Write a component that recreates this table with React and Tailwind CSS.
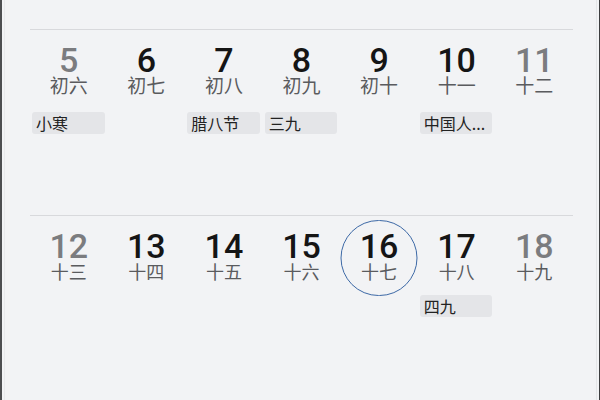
import React from 'react';

const weeks = [
  {
    days: [
      { n: '5', l: '初六', weekend: true, tag: '小寒' },
      { n: '6', l: '初七' },
      { n: '7', l: '初八', tag: '腊八节' },
      { n: '8', l: '初九', tag: '三九' },
      { n: '9', l: '初十' },
      { n: '10', l: '十一', tag: '中国人...' },
      { n: '11', l: '十二', weekend: true },
    ],
  },
  {
    days: [
      { n: '12', l: '十三', weekend: true },
      { n: '13', l: '十四' },
      { n: '14', l: '十五' },
      { n: '15', l: '十六' },
      { n: '16', l: '十七', today: true },
      { n: '17', l: '十八', tag: '四九' },
      { n: '18', l: '十九', weekend: true },
    ],
  },
];

function DayCell({ day, first }) {
  return (
    <div className="relative flex flex-col items-center">
      {day.today && (
        <div className="absolute left-1/2 top-[-12px] h-[76px] w-[77px] -translate-x-1/2 rounded-full border-[1.5px] border-[#3d69a6]" />
      )}
      <div
        className={`text-[34px] leading-[29px] font-medium font-['Roboto',sans-serif] ${day.weekend ? 'text-[#7b7c7f]' : 'text-[#151515]'}`}
      >
        {day.n}
      </div>
      <div
        className={`leading-[19px] text-[#5a5b5e] font-['Noto_Sans_CJK_SC',sans-serif] ${first ? 'text-[19px]' : 'mt-[1px] text-[18px]'}`}
      >
        {day.l}
      </div>
      <div className={`h-[22px] w-full pl-[2px] pr-[3px] ${first ? 'mt-[18px]' : 'mt-[14px]'}`}>
        {day.tag && (
          <div className="flex h-full items-center rounded-[3px] bg-[#e4e5e8] px-[4px] text-[16px] text-[#222] font-['Noto_Sans_CJK_SC',sans-serif] whitespace-nowrap overflow-hidden">
            {day.tag}
          </div>
        )}
      </div>
    </div>
  );
}

export default function App() {
  return (
    <div className="flex h-[400px] w-[600px] bg-[#f2f3f5]">
      <div className="w-[2px] bg-[#4d4e50]" />
      <div className="w-[2px]" />
      <div className="w-[1px] bg-[#e8e9eb]" />
      <div className="flex-1 pl-[25px] pr-[23px]">
        {weeks.map((w, i) => (
          <div key={i} className={i === 0 ? 'pt-[29px]' : 'pt-[81px]'}>
            <div className="h-[1px] bg-[#d8d9dc]" />
            <div className="grid grid-cols-7 pt-[16px]">
              {w.days.map((d) => (
                <DayCell key={d.n} day={d} first={i === 0} />
              ))}
            </div>
          </div>
        ))}
      </div>
      <div className="w-[1px] bg-[#e4e5e7]" />
      <div className="w-[2px]" />
      <div className="w-[1px] bg-[#3c3d3f]" />
    </div>
  );
}
